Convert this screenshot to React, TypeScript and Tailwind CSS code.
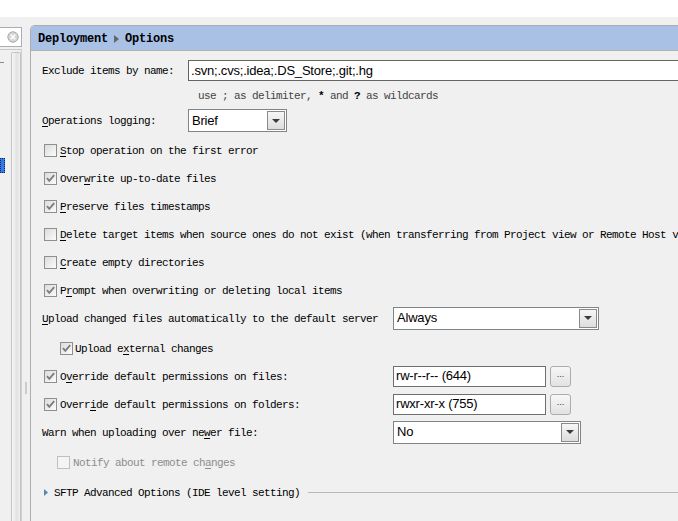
import React from "react";

const mono = "font-['Liberation_Mono',monospace] text-[11px] tracking-[-0.6px] whitespace-nowrap pt-[2px]";
const sans = "font-['Liberation_Sans',Arial,sans-serif] text-[13px] tracking-[-0.2px] text-black whitespace-nowrap";

function L({ t, u }: { t: string; u?: number }) {
  if (u === undefined) return <>{t}</>;
  return (
    <>
      {t.slice(0, u)}
      <span className="underline underline-offset-[2px]">{t[u]}</span>
      {t.slice(u + 1)}
    </>
  );
}

function Check({ checked, disabled }: { checked?: boolean; disabled?: boolean }) {
  return (
    <span
      className={`relative inline-block h-[13px] w-[13px] shrink-0 border ${
        disabled ? "border-[#c0c0c0] bg-[#f4f4f4]" : "border-[#8e8f8f] bg-[linear-gradient(135deg,#dcdcdc,#fbfbfb)]"
      }`}
    >
      {checked && (
        <svg viewBox="0 0 11 11" className="absolute left-0 top-0 h-[11px] w-[11px]">
          <path d="M2 5.2 L4.3 7.8 L9.2 2.2" fill="none" stroke="#7d7d7d" strokeWidth="1.9" />
        </svg>
      )}
    </span>
  );
}

function Combo({ value, w }: { value: string; w: string }) {
  return (
    <div className={`${w} flex h-[23px] shrink-0 items-center border border-[#7f8489] bg-white pl-[3px] pr-[1px]`}>
      <span className={`${sans} flex-1`}>{value}</span>
      <span className="flex h-[19px] w-[18px] items-center justify-center border border-[#8a8a8a] bg-[linear-gradient(#f6f6f6,#dddddd)]">
        <svg viewBox="0 0 8 4" className="h-[4px] w-[8px]">
          <path d="M0 0 H8 L4 4 Z" fill="#3a3a3a" />
        </svg>
      </span>
    </div>
  );
}

function Field({ value, w }: { value: string; w: string }) {
  return (
    <div className={`${w} flex h-[21px] shrink-0 items-center border border-[#6e6e6e] bg-white pl-[2px]`}>
      <span className={sans}>{value}</span>
    </div>
  );
}

function Dots() {
  return (
    <div className="ml-[4px] flex h-[21px] w-[21px] shrink-0 items-start justify-center rounded-[3px] border border-[#acacac] bg-[linear-gradient(#f7f7f7,#e2e2e2)]">
      <span className="mt-[1px] font-['Liberation_Sans',sans-serif] text-[9px] leading-[12px] text-[#333]">...</span>
    </div>
  );
}

function CheckRow({ t, u, checked }: { t: string; u?: number; checked?: boolean }) {
  return (
    <div className="flex h-[28px] items-center pl-[2px]">
      <Check checked={checked} />
      <span className={`${mono} ml-[3px]`}>
        <L t={t} u={u} />
      </span>
    </div>
  );
}

export default function App() {
  return (
    <div className="flex h-[521px] w-[678px] flex-col overflow-hidden bg-[#f0f0f0] text-black">
      <div className="h-[17px] shrink-0 bg-white" />
      <div className="flex flex-1">
        {/* left tree */}
        <div className="flex w-[30px] shrink-0">
          <div className="flex w-[22px] flex-col">
            <div className="mt-[10px] flex h-[20px] items-center justify-end border border-l-0 border-[#abadb3] bg-white pr-[2px]">
              <svg viewBox="0 0 12 12" className="h-[12px] w-[12px]">
                <circle cx="6" cy="6" r="5.2" fill="#d6d6d6" stroke="#a8a8a8" />
                <path d="M3.8 3.8 L8.2 8.2 M8.2 3.8 L3.8 8.2" stroke="#ffffff" strokeWidth="1.5" />
              </svg>
            </div>
            <div className="mt-[2px] flex flex-1 border-t border-[#c8c8c8]">
              <div className="flex w-[11px] flex-col">
                <div className="mt-[12px] h-px w-[4px] bg-[#888]" />
                <div className="mt-[95px] h-[15px] w-[5px] border border-dotted border-[#0a246a] bg-[#3478e0]" />
              </div>
              <div className="mt-[2px] w-[10px] rounded-t-[2px] border border-b-0 border-[#c4c4c4] bg-[linear-gradient(90deg,#f6f6f6,#e2e2e2_60%,#eeeeee)]" />
              <div className="w-px bg-[#d0d0d0]" />
            </div>
          </div>
          <div className="flex w-[8px] flex-col items-center pt-[365px]">
            <div className="h-[12px] w-[2px] bg-[radial-gradient(circle,#a0a0a0_0.6px,transparent_0.8px)] bg-[length:2px_2px]" />
          </div>
        </div>

        {/* right panel */}
        <div className="mt-[8px] flex min-w-0 flex-1 flex-col rounded-tl-[5px] border-l border-t border-[#adadad]">
          <div className="flex h-[25px] shrink-0 items-center rounded-tl-[4px] border-b border-[#b2b2b2] bg-[#a9c1e5] pl-[7px] pt-[2px]">
            <span className="font-['Liberation_Mono',monospace] text-[12px] font-bold tracking-[-0.2px] text-black">
              Deployment
            </span>
            <svg viewBox="0 0 5 8" className="ml-[6px] mr-[6px] h-[8px] w-[5px]">
              <path d="M0 0 L5 4 L0 8 Z" fill="#666" />
            </svg>
            <span className="font-['Liberation_Mono',monospace] text-[12px] font-bold tracking-[-0.2px] text-black">
              Options
            </span>
          </div>

          <div className="flex flex-col pl-[11px]">
            <div className="mt-[9px] flex h-[21px] items-center">
              <span className={`${mono} w-[146px] shrink-0`}>Exclude items by name:</span>
              <div className="flex h-[21px] w-[520px] shrink-0 items-center border border-[#646464] bg-white pl-[2px]">
                <span className={sans}>.svn;.cvs;.idea;.DS_Store;.git;.hg</span>
              </div>
            </div>
            <div className="flex h-[28px] items-center pl-[156px]">
              <span className={`${mono} text-[#444]`}>
                use ; as delimiter, <b className="text-black">*</b> and <b className="text-black">?</b> as wildcards
              </span>
            </div>
            <div className="flex h-[23px] items-center">
              <span className={`${mono} w-[146px] shrink-0`}>
                <L t="Operations logging:" u={0} />
              </span>
              <Combo value="Brief" w="w-[99px]" />
            </div>

            <div className="mt-[4px] flex flex-col">
              <CheckRow t="Stop operation on the first error" u={0} />
              <CheckRow t="Overwrite up-to-date files" u={4} checked />
              <CheckRow t="Preserve files timestamps" u={0} checked />
              <CheckRow
                t="Delete target items when source ones do not exist (when transferring from Project view or Remote Host view)"
                u={0}
              />
              <CheckRow t="Create empty directories" u={0} />
              <CheckRow t="Prompt when overwriting or deleting local items" u={1} checked />
            </div>

            <div className="flex h-[28px] items-center">
              <span className={`${mono} w-[351px] shrink-0`}>
                <L t="Upload changed files automatically to the default server" u={0} />
              </span>
              <Combo value="Always" w="w-[206px]" />
            </div>

            <div className="mt-[2px] flex h-[28px] items-center pl-[18px]">
              <Check checked />
              <span className={`${mono} ml-[2px]`}>
                <L t="Upload external changes" u={8} />
              </span>
            </div>

            <div className="flex h-[28px] items-center">
              <div className="flex w-[351px] shrink-0 items-center pl-[2px]">
                <Check checked />
                <span className={`${mono} ml-[3px]`}>
                  <L t="Override default permissions on files:" u={1} />
                </span>
              </div>
              <Field value="rw-r--r-- (644)" w="w-[153px]" />
              <Dots />
            </div>

            <div className="flex h-[28px] items-center">
              <div className="flex w-[351px] shrink-0 items-center pl-[2px]">
                <Check checked />
                <span className={`${mono} ml-[3px]`}>
                  <L t="Override default permissions on folders:" u={5} />
                </span>
              </div>
              <Field value="rwxr-xr-x (755)" w="w-[153px]" />
              <Dots />
            </div>

            <div className="flex h-[28px] items-center">
              <span className={`${mono} w-[351px] shrink-0`}>
                <L t="Warn when uploading over newer file:" u={27} />
              </span>
              <Combo value="No" w="w-[188px]" />
            </div>

            <div className="mt-[2px] flex h-[28px] items-center pl-[15px]">
              <Check disabled />
              <span className={`${mono} ml-[3px] text-[#8d8d8d]`}>
                <L t="Notify about remote changes" u={22} />
              </span>
            </div>

            <div className="mt-[2px] flex h-[28px] items-center pl-[2px]">
              <svg viewBox="0 0 4 7" className="h-[7px] w-[4px]">
                <path d="M0 0 L4 3.5 L0 7 Z" fill="#5a86b8" />
              </svg>
              <span className={`${mono} ml-[6px]`}>SFTP Advanced Options (IDE level setting)</span>
              <div className="ml-[8px] h-px flex-1 bg-[#b8b8b8]" />
            </div>
          </div>
        </div>
      </div>
    </div>
  );
}
